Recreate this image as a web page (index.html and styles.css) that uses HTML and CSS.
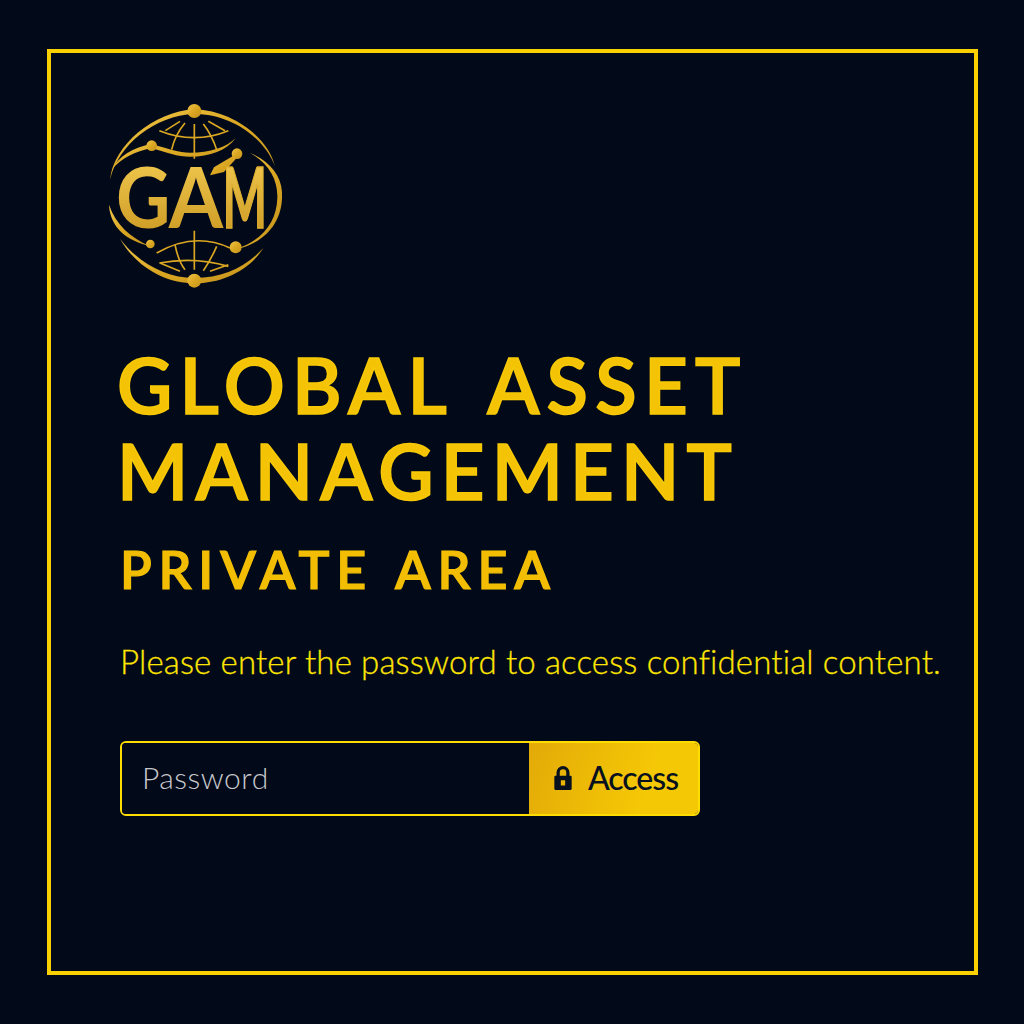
FILE: index.html
```html
<!DOCTYPE html>
<html lang="en">
<head>
<meta charset="utf-8">
<title>Global Asset Management</title>
<link rel="stylesheet" href="styles.css">
</head>
<body>
<main class="frame">
  <svg class="logo" viewBox="54 45 522 558" aria-label="GAM logo">
    <defs>
      <linearGradient id="gold" x1="0" y1="0" x2="1" y2="1">
        <stop offset="0" stop-color="#f0c54a"/>
        <stop offset="0.5" stop-color="#dba722"/>
        <stop offset="1" stop-color="#c3921d"/>
      </linearGradient>
      <linearGradient id="letter" x1="0" y1="0" x2="0" y2="1">
        <stop offset="0" stop-color="#f6cf55"/>
        <stop offset="1" stop-color="#c8951f"/>
      </linearGradient>
    </defs>
    <g class="logo-fills">
      <path d="M60 275C72 170 190 72 313 64C430 68 535 150 555 235C525 155 430 78 313 78C195 82 85 170 60 275Z"/>
      <path d="M90 452C140 540 230 586 313 586C400 586 480 545 520 480C470 535 400 570 313 570C230 570 145 525 90 452Z"/>
      <path d="M480 195C545 222 580 270 576 330C574 400 530 464 437 484C520 456 560 400 562 330C564 275 535 225 480 195Z"/>
      <path d="M57 350C60 418 110 458 180 474C120 448 78 410 57 350Z"/>
      <path d="M65 245C85 205 130 178 185 168C240 184 265 194 300 194C360 194 410 178 437 150C410 188 360 206 300 206C262 206 230 194 185 180C135 190 95 210 65 245Z"/>
      <path d="M360 262L372 238L430 203L438 212L402 252Z"/>
      <circle cx="313" cy="69" r="21"/>
      <circle cx="313" cy="578" r="21"/>
      <circle cx="185" cy="173" r="16"/>
      <circle cx="441" cy="197" r="16"/>
      <circle cx="181" cy="468" r="13"/>
      <circle cx="437" cy="478" r="18"/>
    </g>
    <g class="logo-lines">
      <path d="M208 128Q313 170 415 128"/>
      <path d="M226 128L270 100M355 100L405 128"/>
      <path d="M285 105Q255 140 245 185M340 108Q365 140 380 185"/>
      <path d="M200 495Q313 430 420 480"/>
      <path d="M208 525Q313 505 415 535"/>
      <path d="M210 525L270 550M415 530L360 550"/>
      <path d="M255 470Q265 520 285 545M380 475Q360 520 340 548"/>
      <path d="M313 108V212M313 428V545"/>
    </g>
    <g class="logo-text">
      <text transform="translate(78 420) scale(.9 1)">G</text>
      <text transform="translate(236 420) scale(.94 1)">A</text>
      <text class="logo-m" transform="translate(398 420) scale(.56 1)">M</text>
    </g>
  </svg>
  <h1 class="title">GLOBAL ASSET<br>MANAGEMENT</h1>
  <h2 class="subtitle">PRIVATE AREA</h2>
  <p class="prompt">Please enter the password to access confidential content.</p>
  <form class="login">
    <input class="password" type="password" placeholder="Password">
    <button class="access" type="button">
      <svg class="lock" viewBox="0 0 18 24" aria-hidden="true">
        <path class="shackle" d="M4.5 11V7a4.5 4.5 0 0 1 9 0v4"/>
        <path class="lock-body" fill-rule="evenodd" d="M2 10h14a1 1 0 0 1 1 1v11a1 1 0 0 1-1 1H2a1 1 0 0 1-1-1V11a1 1 0 0 1 1-1zM7 14v5h4v-5z"/>
      </svg>
      <span>Access</span>
    </button>
  </form>
</main>
</body>
</html>
```
FILE: styles.css
```css
* { box-sizing: border-box; }
html, body { margin: 0; height: 100%; }
body {
  background: #020a1a;
  padding: 49px 46px 49px 47px;
  font-family: "Lato", "Open Sans", sans-serif;
}
.frame {
  height: 926px;
  border: 4px solid #fad000;
  padding: 50px 0 0 69px;
  display: flex;
  flex-direction: column;
  align-items: flex-start;
}
.logo {
  width: 174px;
  height: 186px;
  margin-left: -12px;
  flex: none;
}
.logo-fills { fill: url(#gold); }
.logo-lines { fill: none; stroke: #dba722; stroke-width: 5; }
.logo-text { font-family: "Lato", sans-serif; font-size: 250px; font-weight: 700; fill: url(#letter); }
.logo-m { stroke: #e0b030; stroke-width: 5px; }
.title, .subtitle {
  margin: 0;
  font-weight: 600;
  color: #f4c305;
}
.title {
  margin: 53px 0 0 -3px;
  font-size: 76px;
  line-height: 86px;
  letter-spacing: 7.2px;
  word-spacing: 12px;
  -webkit-text-stroke: 1.6px #f6c805;
}
.subtitle {
  margin: 25px 0 0;
  font-size: 52px;
  line-height: 60px;
  letter-spacing: 6.8px;
  word-spacing: 4px;
  color: #f2bd03;
  -webkit-text-stroke: 1.2px #f3c004;
}
.prompt {
  margin: 40px 0 0;
  font-size: 33px;
  font-weight: 300;
  line-height: 44px;
  letter-spacing: 0.14px;
  color: #ffe600;
  -webkit-text-stroke: 0.3px #ffe600;
  white-space: nowrap;
}
.login {
  margin-top: 58px;
  width: 580px;
  height: 75px;
  display: flex;
  border: 2px solid #ffdc00;
  border-radius: 6px;
  overflow: hidden;
}
.password {
  flex: 1;
  min-width: 0;
  background: #020a1a;
  border: 0;
  padding: 0 20px 4px;
  font: 300 30px "Lato", sans-serif;
  letter-spacing: 0.5px;
  color: #c8c8cc;
  outline: none;
}
.password::placeholder { color: #c8c8cc; opacity: 1; }
.access {
  width: 169px;
  border: 0;
  padding: 0 0 2px 4px;
  display: flex;
  align-items: center;
  justify-content: center;
  gap: 15px;
  background: linear-gradient(110deg, #e3aa08, #f5c805 70%);
  color: #06101f;
  font: 500 32px "Lato", sans-serif;
  letter-spacing: -1px;
}
.lock { width: 20px; height: 26px; }
.shackle { fill: none; stroke: #06101f; stroke-width: 3; }
.lock-body { fill: #06101f; }
```
